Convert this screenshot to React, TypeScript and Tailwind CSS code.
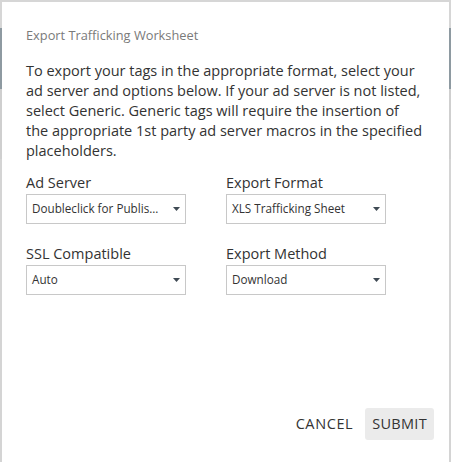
import React from "react";

const font = { fontFamily: '"Open Sans", "DejaVu Sans", sans-serif' };

const intro = [
  "To export your tags in the appropriate format, select your",
  "ad server and options below. If your ad server is not listed,",
  "select Generic. Generic tags will require the insertion of",
  "the appropriate 1st party ad server macros in the specified",
  "placeholders.",
];

function Select({ value }: { value: string }) {
  return (
    <div className="flex h-[30px] w-[160px] items-center justify-between border border-[#c8c8c8] bg-white pl-[5px] pr-[5px] text-[11.7px] text-[#333]">
      <span className="whitespace-nowrap">{value}</span>
      <svg width="7" height="4" viewBox="0 0 7 4" className="shrink-0">
        <path d="M0 0 H7 L3.5 4 Z" fill="#3f4a54" />
      </svg>
    </div>
  );
}

function Field({ label, value }: { label: string; value: string }) {
  return (
    <div className="flex flex-col">
      <label className="mb-[1px] text-[14.5px] leading-[20px] text-[#333]">{label}</label>
      <Select value={value} />
    </div>
  );
}

export default function App() {
  return (
    <div className="relative h-[462px] w-[451px] overflow-hidden bg-[#d6d6d6]" style={font}>
      {/* backdrop page */}
      <div className="flex h-full flex-col">
        <div className="h-[28px]" />
        <div className="h-[61px] bg-[#8e9aa1]" />
        <div className="h-[70px] bg-[#cfcfcf]" />
        <div className="flex-1 bg-[#d4d4d4]" />
      </div>

      {/* modal */}
      <div className="absolute bottom-0 left-[2px] right-[2px] top-[2px] flex flex-col bg-white px-[24px]">
        <h2 className="mt-[24px] text-[12.8px] leading-[18px] text-[#7a7a7a]">Export Trafficking Worksheet</h2>
        <p className="mt-[17px] whitespace-nowrap text-[14.5px] leading-[20px] text-[#333]">
          {intro.map((line, i) => (
            <span key={i} className="block">{line}</span>
          ))}
        </p>
        <div className="mt-[12px] grid grid-cols-[200px_160px] gap-y-[20px]">
          <Field label="Ad Server" value="Doubleclick for Publis..." />
          <Field label="Export Format" value="XLS Trafficking Sheet" />
          <Field label="SSL Compatible" value="Auto" />
          <Field label="Export Method" value="Download" />
        </div>
        <div className="mb-[22px] mr-[-9px] mt-auto flex items-center justify-end gap-[4px]">
          <button className="h-[32px] px-[8px] text-[14.5px] tracking-[0.6px] text-[#333]">CANCEL</button>
          <button className="h-[32px] rounded-[3px] bg-[#ebebeb] px-[7px] text-[14.5px] tracking-[0.3px] text-[#333]">SUBMIT</button>
        </div>
      </div>
    </div>
  );
}
